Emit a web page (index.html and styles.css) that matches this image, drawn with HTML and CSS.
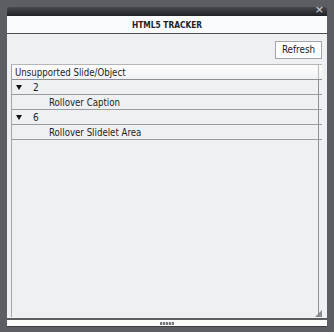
FILE: index.html
```html
<!DOCTYPE html>
<html>
<head>
<meta charset="utf-8">
<link rel="stylesheet" href="styles.css">
</head>
<body>
<div class="window">
  <div class="topbar"><span class="close">×</span></div>
  <div class="title">HTML5 TRACKER</div>
  <div class="content">
    <div class="toolbar"><button class="refresh">Refresh</button></div>
    <div class="list">
      <div class="row header"><span class="cell">Unsupported Slide/Object</span></div>
      <div class="row"><span class="cell"><span class="tri"></span><span class="num">2</span></span></div>
      <div class="row"><span class="cell child">Rollover Caption</span></div>
      <div class="row"><span class="cell"><span class="tri"></span><span class="num">6</span></span></div>
      <div class="row"><span class="cell child">Rollover Slidelet Area</span></div>
      <div class="filler"><span class="cell"></span></div>
      <div class="grip"></div>
    </div>
  </div>
  <div class="bottom"><span class="handle"></span></div>
</div>
</body>
</html>
```

FILE: styles.css
```css
html, body {
  margin: 0;
  padding: 0;
  background: #5b5e63;
  height: 332px;
  overflow: hidden;
}
body {
  font-family: "DejaVu Sans Condensed", "DejaVu Sans", sans-serif;
}
.window {
  margin: 7px 0 0 7px;
  width: 320px;
  display: flex;
  flex-direction: column;
}
.topbar {
  height: 9px;
  background: linear-gradient(#45484d, #1f2124);
  border-radius: 3px 3px 0 0;
  position: relative;
}
.close {
  position: absolute;
  right: 3px;
  top: -3px;
  font-family: "DejaVu Sans", sans-serif;
  font-size: 11px;
  font-weight: bold;
  color: #b9bcc0;
  line-height: 12px;
}
.title {
  height: 17px;
  background: #fafbfc;
  border-bottom: 1px solid #4a4c50;
  font-family: "DejaVu Sans Condensed", "DejaVu Sans", sans-serif;
  font-size: 8.3px;
  font-weight: bold;
  color: #222;
  text-align: center;
  line-height: 18px;
}
.content {
  height: 284px;
  background: #eff0f4;
  padding: 7px 5px 0 4px;
  box-sizing: border-box;
  display: flex;
  flex-direction: column;
}
.toolbar {
  display: flex;
  justify-content: flex-end;
  margin-bottom: 5px;
}
.refresh {
  width: 47px;
  height: 18px;
  margin: 0;
  padding: 0;
  background: #fdfdfd;
  border: 1px solid #a3a5a8;
  border-radius: 0;
  font-family: "DejaVu Sans Condensed", "DejaVu Sans", sans-serif;
  font-size: 9.8px;
  color: #222;
  line-height: 16px;
}
.list {
  flex: 1;
  display: flex;
  flex-direction: column;
  border-left: 1px solid #a6a7aa;
  border-top: 1px solid #b5b6b9;
  position: relative;
  margin-bottom: 1px;
}
.row {
  height: 14px;
  border-bottom: 1px solid #9b9c9f;
  display: flex;
  padding-right: 3px;
}
.cell {
  flex: 1;
  display: flex;
  align-items: center;
  border-right: 1px solid #8f9093;
  font-family: "DejaVu Sans Condensed", "DejaVu Sans", sans-serif;
  font-size: 9.6px;
  color: #1e1e1e;
  padding-left: 3px;
  white-space: nowrap;
}
.header {
  background: linear-gradient(#fdfdfd, #f1f2f4);
  border-bottom: 1px solid #8e8f92;
}
.header .cell {
  border-right: 1px solid #b8b9bc;
}
.tri {
  width: 0;
  height: 0;
  border-left: 3px solid transparent;
  border-right: 3px solid transparent;
  border-top: 5px solid #111;
  margin-left: 1px;
  margin-right: 11px;
}
.num {
  font-size: 10px;
}
.child {
  padding-left: 37px;
}
.filler {
  flex: 1;
  display: flex;
  padding-right: 3px;
}
.filler .cell {
  border-right: 1px solid #8f9093;
}
.grip {
  position: absolute;
  right: 0;
  bottom: 0;
  width: 7px;
  height: 7px;
  background:
    radial-gradient(circle, #8a8b8e 0.8px, transparent 1.2px) 0 0 / 2px 2px;
  clip-path: polygon(100% 0, 100% 100%, 0 100%);
}
.bottom {
  height: 6px;
  background: #fbfbfc;
  border-top: 2px solid #5c5e62;
  border-bottom: 1px solid #3e4044;
  display: flex;
  justify-content: center;
  align-items: center;
}
.handle {
  width: 14px;
  height: 3px;
  background: repeating-linear-gradient(90deg, #77797d 0 2px, #d0d1d4 2px 3px);
}
```
